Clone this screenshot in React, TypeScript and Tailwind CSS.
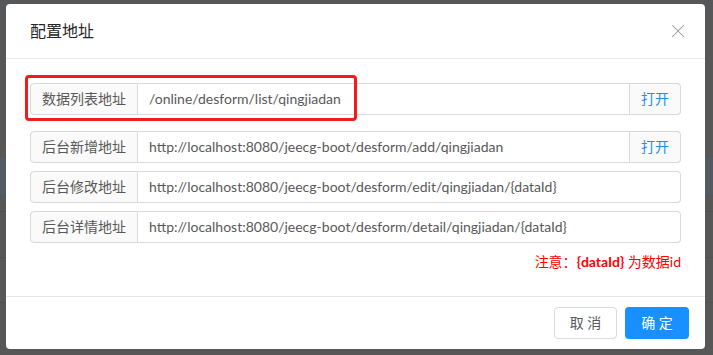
import { X } from "lucide-react";

const rows = [
  { label: "数据列表地址", url: "/online/desform/list/qingjiadan", open: true, marked: true },
  { label: "后台新增地址", url: "http://localhost:8080/jeecg-boot/desform/add/qingjiadan", open: true },
  { label: "后台修改地址", url: "http://localhost:8080/jeecg-boot/desform/edit/qingjiadan/{dataId}" },
  { label: "后台详情地址", url: "http://localhost:8080/jeecg-boot/desform/detail/qingjiadan/{dataId}" },
];

function AddressRow({ label, url, open }: { label: string; url: string; open?: boolean }) {
  return (
    <div className="flex h-8 text-sm text-[#595959]">
      <div className="flex items-center rounded-l border border-[#d9d9d9] bg-[#fafafa] px-[11px]">{label}</div>
      <div
        className={`flex flex-1 items-center border-y border-r border-[#d9d9d9] px-[11px] ${open ? "" : "rounded-r"}`}
      >
        {url}
      </div>
      {open && (
        <div className="flex w-[51px] items-center justify-center rounded-r border-y border-r border-[#d9d9d9] bg-[#fafafa] text-[#1890ff]">
          打开
        </div>
      )}
    </div>
  );
}

export default function App() {
  return (
    <div
      className="relative h-[355px] w-[713px] overflow-hidden bg-[#575757]"
      style={{ fontFamily: 'Lato, "Noto Sans CJK SC", sans-serif' }}
    >
      {/* dimmed page behind the mask */}
      <div className="flex flex-col">
        <div className="h-[5px] border-b border-[#4b5a68]" />
        <div className="h-[152px] border-b border-[#4e5660]" />
        <div className="h-[39px] border-b border-[#4e5660] bg-[#535a61]" />
        <div className="h-[16px] border-b border-[#505050]" />
        <div className="h-[46px] border-b border-[#505050]" />
        <div className="h-[45px] border-b border-[#505050]" />
      </div>

      <div className="absolute left-[6px] top-[4px] w-[699px] rounded bg-white">
        <div className="flex h-[55px] items-center justify-between border-b border-[#e8e8e8] pl-6 pr-[16px]">
          <span className="text-base text-[#262626]">配置地址</span>
          <X size={22} strokeWidth={1.1} className="text-[#999]" />
        </div>

        <div className="px-6 pb-[23px] pt-6">
          <div className="relative mb-4">
            <span className="absolute -left-[5px] -top-[8px] h-[46px] w-[332px] rounded border-[3px] border-[#f21c1c]" />
            <AddressRow {...rows[0]} />
          </div>
          <div className="flex flex-col gap-2">
            {rows.slice(1).map((r) => (
              <AddressRow key={r.label} {...r} />
            ))}
          </div>
          <div className="mt-2 text-right text-sm leading-[22px] text-[#ff0000]">
            注意：<b className="font-bold">{"{dataId}"}</b> 为数据id
          </div>
        </div>

        <div className="flex justify-end gap-2 border-t border-[#e8e8e8] px-4 py-[10px]">
          <button className="h-8 w-[63px] rounded border border-[#d9d9d9] bg-white text-sm text-[#595959]">
            取 消
          </button>
          <button className="h-8 w-[64px] rounded bg-[#1890ff] text-sm text-white">确 定</button>
        </div>
      </div>
    </div>
  );
}
